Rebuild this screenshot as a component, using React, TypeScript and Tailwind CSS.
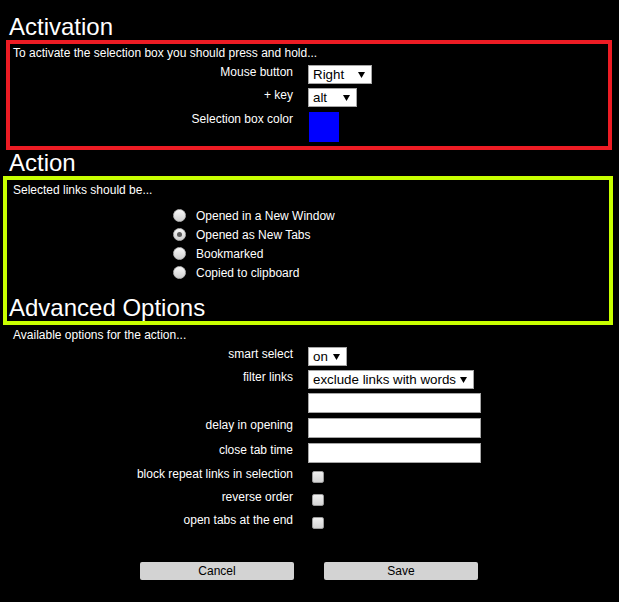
import React from 'react'

function Select({ value, className }: { value: string; className: string }) {
  return (
    <div
      className={`flex h-[19px] items-center justify-between border border-[#a6a6a6] bg-white pl-[4px] pr-[6px] text-[13.33px] leading-[15px] text-black ${className}`}
    >
      <span>{value}</span>
      <svg width="7" height="6" viewBox="0 0 7 6" className="shrink-0">
        <path d="M0 0h7L3.5 6z" fill="#000" />
      </svg>
    </div>
  )
}

function Label({ children }: { children?: React.ReactNode }) {
  return <div className="w-[280px] shrink-0 text-right">{children}</div>
}

function Checkbox() {
  return (
    <span className="mt-[4px] ml-[4px] block h-[12px] w-[12px] rounded-[2px] border border-[#9b9b9b] bg-gradient-to-b from-[#f0f0f0] to-[#d4d4d4]" />
  )
}

function Radio({ checked }: { checked?: boolean }) {
  return (
    <span className="flex h-[13px] w-[13px] items-center justify-center rounded-full border border-[#b8b8b8] bg-gradient-to-b from-[#f8f8f8] to-[#d0d0d0]">
      {checked && <span className="h-[5px] w-[5px] rounded-full bg-[#5a5a5a]" />}
    </span>
  )
}

const actions = [
  { label: 'Opened in a New Window', checked: false },
  { label: 'Opened as New Tabs', checked: true },
  { label: 'Bookmarked', checked: false },
  { label: 'Copied to clipboard', checked: false },
]

export default function App() {
  return (
    <div className="min-h-[602px] bg-black font-['Liberation_Sans',Arial,sans-serif] text-[12px] leading-[14px] text-white">
      <h1 className="pl-[9px] pt-[13px] text-[24px] leading-[27px]">Activation</h1>

      {/* activation box */}
      <section className="ml-[6px] w-[606px] border-4 border-[#ed1c24] pl-[3px] pt-[2px] pb-[4px]">
        <p>To activate the selection box you should press and hold...</p>
        <div className="mt-[5px] flex items-start gap-[15px]">
          <Label>Mouse button</Label>
          <Select value="Right" className="w-[64px]" />
        </div>
        <div className="mt-[4px] flex items-start gap-[15px]">
          <Label>+ key</Label>
          <Select value="alt" className="w-[49px]" />
        </div>
        <div className="mt-[5px] flex items-start gap-[15px]">
          <Label>Selection box color</Label>
          <span className="ml-[1px] block h-[30px] w-[30px] bg-[#0000ff]" />
        </div>
      </section>

      <h2 className="pl-[9px] text-[24px] leading-[26px]">Action</h2>

      {/* action box */}
      <section className="ml-[3px] w-[610px] border-4 border-[#c8ff00] pt-[3px]">
        <p className="pl-[6px]">Selected links should be...</p>
        <div className="mt-[9px] ml-[166px]">
          {actions.map((a) => (
            <div key={a.label} className="flex h-[19px] items-center gap-[10px]">
              <Radio checked={a.checked} />
              <span>{a.label}</span>
            </div>
          ))}
        </div>
        <h2 className="mt-[12px] pl-[2px] text-[24px] leading-[27px]">Advanced Options</h2>
      </section>

      {/* advanced options */}
      <section className="pl-[13px] pt-[3px]">
        <p>Available options for the action...</p>
        <div className="mt-[5px] flex items-start gap-[15px]">
          <Label>smart select</Label>
          <Select value="on" className="w-[39px]" />
        </div>
        <div className="mt-[4px] flex items-start gap-[15px]">
          <Label>filter links</Label>
          <Select value="exclude links with words" className="w-[166px]" />
        </div>
        <div className="mt-[4px] flex items-start gap-[15px]">
          <Label />
          <input className="h-[20px] w-[173px] border border-[#a6a6a6] bg-white" />
        </div>
        <div className="mt-[5px] flex items-start gap-[15px]">
          <Label>delay in opening</Label>
          <input className="h-[20px] w-[173px] border border-[#a6a6a6] bg-white" />
        </div>
        <div className="mt-[5px] flex items-start gap-[15px]">
          <Label>close tab time</Label>
          <input className="h-[20px] w-[173px] border border-[#a6a6a6] bg-white" />
        </div>
        <div className="mt-[4px]">
          {['block repeat links in selection', 'reverse order', 'open tabs at the end'].map((t) => (
            <div key={t} className="flex h-[23px] items-start gap-[15px]">
              <Label>{t}</Label>
              <Checkbox />
            </div>
          ))}
        </div>

        <div className="mt-[26px] flex gap-[30px] pl-[127px]">
          <button className="h-[18px] w-[154px] rounded-[2px] bg-[#d3d3d3] text-[12px] text-black">Cancel</button>
          <button className="h-[18px] w-[154px] rounded-[2px] bg-[#d3d3d3] text-[12px] text-black">Save</button>
        </div>
      </section>
    </div>
  )
}
